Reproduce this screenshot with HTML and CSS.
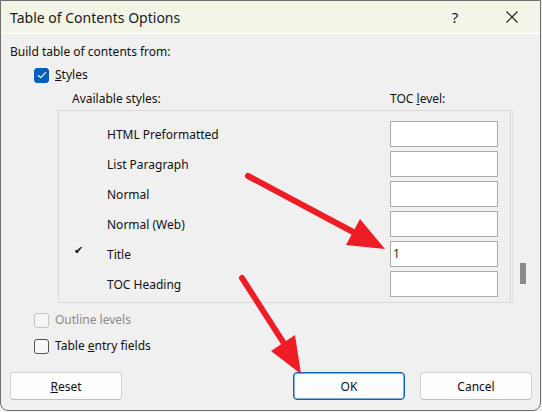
FILE: index.html
```html
<!DOCTYPE html>
<html>
<head>
<meta charset="utf-8">
<link rel="stylesheet" href="styles.css">
</head>
<body>
<div class="window">
  <div class="titlebar">
    <span class="title">Table of Contents Options</span>
    <span class="help">?</span>
    <span class="close">
      <svg width="12" height="12" viewBox="0 0 12 12"><path d="M0.5 0.5 L11.5 11.5 M11.5 0.5 L0.5 11.5" stroke="#1a1a1a" stroke-width="1.1" fill="none"/></svg>
    </span>
  </div>
  <div class="content">
    <div class="label">Build table of contents from:</div>
    <div class="check-row styles-row">
      <span class="box checked">
        <svg width="10" height="8" viewBox="0 0 10 8"><path d="M1 4.2 L3.6 6.6 L9 1.2" stroke="#fff" stroke-width="1.2" fill="none"/></svg>
      </span>
      <span><u>S</u>tyles</span>
    </div>
    <div class="headers">
      <span class="h-avail">Available styles:</span>
      <span class="h-toc">TOC <u>l</u>evel:</span>
    </div>
    <div class="list-wrap">
      <div class="listbox">
        <div class="row"><span class="mark"></span><span class="name">HTML Preformatted</span><span class="input"></span></div>
        <div class="row"><span class="mark"></span><span class="name">List Paragraph</span><span class="input"></span></div>
        <div class="row"><span class="mark"></span><span class="name">Normal</span><span class="input"></span></div>
        <div class="row"><span class="mark"></span><span class="name">Normal (Web)</span><span class="input"></span></div>
        <div class="row"><span class="mark">&#10004;</span><span class="name">Title</span><span class="input">1</span></div>
        <div class="row"><span class="mark"></span><span class="name">TOC Heading</span><span class="input"></span></div>
      </div>
      <div class="scrollbar"><div class="thumb"></div></div>
    </div>
    <div class="check-row outline-row disabled">
      <span class="box"></span>
      <span>Outline levels</span>
    </div>
    <div class="check-row entry-row">
      <span class="box"></span>
      <span>Table <u>e</u>ntry fields</span>
    </div>
    <div class="buttons">
      <button class="btn"><u>R</u>eset</button>
      <span class="spacer"></span>
      <button class="btn primary">OK</button>
      <button class="btn">Cancel</button>
    </div>
  </div>
</div>
<svg class="arrows" width="542" height="412" viewBox="0 0 542 412">
  <line x1="248" y1="176" x2="355" y2="233" stroke="#ee1c25" stroke-width="6" stroke-linecap="round"/>
  <polygon points="385,249 360,219 346,245" fill="#ee1c25"/>
  <line x1="242" y1="278" x2="285" y2="345" stroke="#ee1c25" stroke-width="6" stroke-linecap="round"/>
  <polygon points="301,374 295,335 271,351" fill="#ee1c25"/>
</svg>
</body>
</html>
```
FILE: styles.css
```css
html, body {
  margin: 0;
  padding: 0;
  background: #f3f3f3;
}
body {
  width: 542px;
  height: 412px;
  position: relative;
  overflow: hidden;
  font-family: "Noto Sans", "Open Sans", sans-serif;
  font-size: 12px;
  color: #111;
}
.window {
  box-sizing: border-box;
  width: 541px;
  height: 411px;
  border: 1px solid #6e6e6e;
  border-radius: 0 0 8px 8px;
  background: #f0f0f0;
  display: flex;
  flex-direction: column;
  overflow: hidden;
}
.titlebar {
  height: 32px;
  background: #f3f5e9;
  border-bottom: 1px solid #ffffff;
  display: flex;
  align-items: center;
  flex-shrink: 0;
}
.title {
  font-size: 14px;
  padding-left: 9px;
  flex: 1;
  color: #1a1a1a;
}
.help {
  font-size: 15px;
  width: 20px;
  text-align: center;
  margin-right: 41px;
  color: #1a1a1a;
}
.close {
  display: flex;
  width: 12px;
  margin-right: 22px;
}
.content {
  display: flex;
  flex-direction: column;
  padding: 10px 8px 0 9px;
}
.label {
  line-height: 16px;
  height: 16px;
}
.check-row {
  display: flex;
  align-items: center;
  gap: 6px;
  height: 16px;
  line-height: 16px;
  padding-left: 24px;
}
.styles-row {
  margin-top: 7px;
}
.box {
  box-sizing: border-box;
  width: 15px;
  height: 15px;
  border: 1px solid #505050;
  border-radius: 3px;
  background: #f8f8f8;
  display: flex;
  align-items: center;
  justify-content: center;
}
.box.checked {
  background: #005fb8;
  border-color: #005fb8;
}
.disabled {
  color: #8a8a8a;
}
.disabled .box {
  border-color: #c4c4c4;
  background: #f5f5f5;
}
.headers {
  display: flex;
  height: 16px;
  line-height: 16px;
  margin-top: 8px;
}
.h-avail {
  padding-left: 62px;
  width: 318px;
}
.list-wrap {
  display: flex;
  margin-top: 3px;
  margin-left: 48px;
}
.listbox {
  box-sizing: border-box;
  width: 453px;
  height: 193px;
  border: 1px solid #d9d9d9;
  padding-top: 8px;
  display: flex;
  flex-direction: column;
}
.row {
  display: flex;
  align-items: center;
  height: 30px;
}
.mark {
  width: 15px;
  padding-left: 15px;
  font-size: 11px;
  font-family: "DejaVu Sans", sans-serif;
  color: #111;
  margin-top: -8px;
}
.name {
  width: 283px;
  padding-left: 18px;
}
.input {
  box-sizing: border-box;
  width: 108px;
  height: 26px;
  border: 1px solid #ababab;
  background: #ffffff;
  line-height: 24px;
  padding-left: 2px;
  color: #3a2a10;
}
.scrollbar {
  width: 20px;
  border-left: 1px solid #e2e2e2;
  margin-left: 1px;
  display: flex;
  justify-content: center;
  padding-top: 153px;
  box-sizing: border-box;
}
.thumb {
  width: 6px;
  height: 21px;
  background: #8a8a8a;
}
.outline-row {
  margin-top: 9px;
}
.entry-row {
  margin-top: 10px;
}
.buttons {
  display: flex;
  margin-top: 18px;
  gap: 15px;
}
.spacer {
  flex: 1;
}
.btn {
  box-sizing: border-box;
  width: 112px;
  height: 28px;
  background: #fdfdfd;
  border: 1px solid #d0d0d0;
  border-bottom-color: #bdbdbd;
  border-radius: 4px;
  font-family: "Noto Sans", "Open Sans", sans-serif;
  font-size: 12px;
  color: #111;
  padding: 0;
}
.btn.primary {
  border: 1px solid #0067c0;
  box-shadow: inset 0 0 0 0.5px #0067c0;
}
.arrows {
  position: absolute;
  left: 0;
  top: 0;
  pointer-events: none;
}
```
